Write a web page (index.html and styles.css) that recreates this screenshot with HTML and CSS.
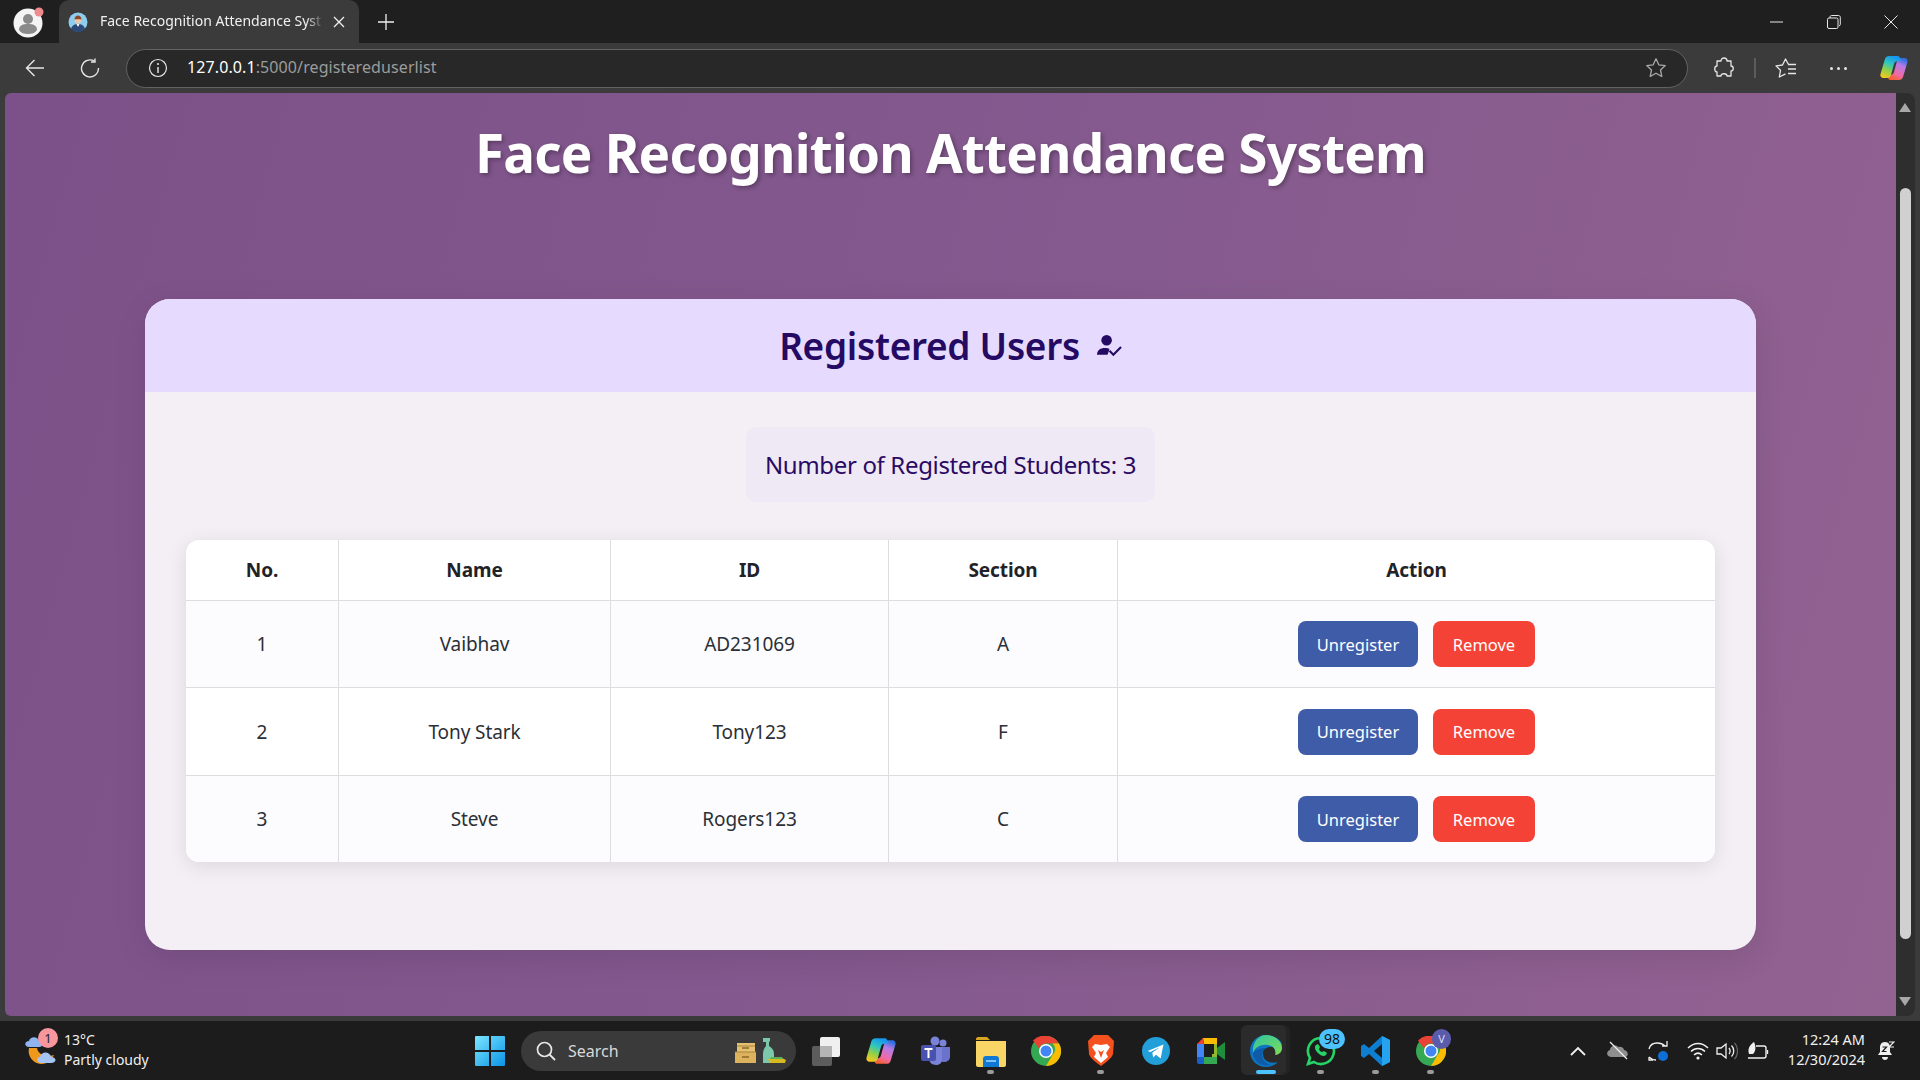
FILE: index.html
```html
<!DOCTYPE html>
<html lang="en">
<head>
    <meta charset="UTF-8">
    <title>Face Recognition Attendance System</title>
    <link rel="stylesheet" href="styles.css">
</head>
<body>
    <!-- browser tab strip -->
    <div class="tabstrip">
        <div class="profile">
            <svg width="32" height="32" viewBox="0 0 32 32"><circle cx="15" cy="17" r="14.5" fill="#f4f4f4"/><circle cx="15" cy="13" r="5" fill="#8a8a8a"/><path d="M6 24c0-5 4-6 9-6s9 1 9 6c-2 3-5 4-9 4s-7-1-9-4z" fill="#8a8a8a"/><circle cx="26" cy="6" r="4.500" fill="#f08a8e"/></svg>
        </div>
        <div class="tab">
            <svg class="favicon" width="20" height="20" viewBox="0 0 20 20"><circle cx="10" cy="10" r="9.500" fill="#8fcdf0"/><path d="M3 17c1-4 4-5 7-5s6 1 7 5c-2 2-4 3-7 3s-5-1-7-3z" fill="#2c4a78"/><path d="M8.500 12h3l-1.500 3z" fill="#fff"/><circle cx="10" cy="8" r="3.400" fill="#f0c6a4"/><path d="M6.500 7.500c0-3 2-4 3.500-4s3.500 1 3.500 4c-2-.5-5-.5-7 0z" fill="#8a4a2a"/></svg>
            <span class="tab-title">Face Recognition Attendance Syst</span>
            <svg class="tab-close" width="12" height="12" viewBox="0 0 12 12"><path d="M1 1l10 10M11 1L1 11" stroke="#f0f0f0" stroke-width="1.300"/></svg>
        </div>
        <svg class="new-tab" width="18" height="18" viewBox="0 0 18 18"><path d="M9 1v16M1 9h16" stroke="#f0f0f0" stroke-width="1.300"/></svg>
        <div class="win-controls">
            <svg width="14" height="14" viewBox="0 0 14 14"><path d="M0 7h13" stroke="#e8e8e8" stroke-width="1"/></svg>
            <svg width="14" height="14" viewBox="0 0 14 14"><path d="M3 3V2c0-.8.5-1.500 1.500-1.500h7c1 0 1.800.8 1.800 1.800v7c0 1-.5 1.500-1.300 1.500" fill="none" stroke="#e8e8e8"/><rect x=".5" y="3" width="10.500" height="10.500" rx="1.500" fill="none" stroke="#e8e8e8"/></svg>
            <svg width="14" height="14" viewBox="0 0 14 14"><path d="M.5.5l13 13M13.500.5l-13 13" stroke="#e8e8e8" stroke-width="1"/></svg>
        </div>
    </div>

    <!-- address bar row -->
    <div class="toolbar">
        <svg class="tool-back" width="20" height="20" viewBox="0 0 20 20"><path d="M19 10H1.500M9.500 2l-8 8 8 8" fill="none" stroke="#e6e6e6" stroke-width="1.400"/></svg>
        <svg class="tool-reload" width="20" height="20" viewBox="0 0 20 20"><path d="M14.500 3.200A8.500 8.500 0 1 0 18.500 10" fill="none" stroke="#e6e6e6" stroke-width="1.400"/><path d="M15 .5v3.500h-4" fill="none" stroke="#e6e6e6" stroke-width="1.400"/></svg>
        <div class="address">
            <svg class="info" width="20" height="20" viewBox="0 0 20 20"><circle cx="10" cy="10" r="8.500" fill="none" stroke="#e8e8e8" stroke-width="1.200"/><path d="M10 9v6" stroke="#e8e8e8" stroke-width="1.400"/><circle cx="10" cy="6" r="1" fill="#e8e8e8"/></svg>
            <span class="url"><b>127.0.0.1</b>:5000/registereduserlist</span>
            <svg class="star" width="22" height="22" viewBox="0 0 22 22"><path d="M11 1.800l2.800 6 6.500.8-4.800 4.400 1.300 6.500-5.800-3.300-5.800 3.300 1.300-6.500L1.700 8.600l6.500-.8z" fill="none" stroke="#a8a8a8" stroke-width="1.300" stroke-linejoin="round"/></svg>
        </div>
        <svg class="tool-puzzle" width="20" height="22" viewBox="0 0 20 22"><path d="M7 4c0-4 6-4 6 0h4v5c3 0 3 5 0 5v5h-4c0-3-6-3-6 0H3v-4c-3 0-3-6 0-6V4z" fill="none" stroke="#e6e6e6" stroke-width="1.300" stroke-linejoin="round"/></svg>
        <span class="tool-sep"></span>
        <svg class="tool-fav" width="22" height="20" viewBox="0 0 22 20"><path d="M13.500 6.500L10.500 1 7.500 7 1 7.800l4.500 4.500L4.300 19l6.200-3.200" fill="none" stroke="#e6e6e6" stroke-width="1.300" stroke-linejoin="round"/><path d="M13 6.500h8M13 11h8M13 15.500h8" stroke="#e6e6e6" stroke-width="1.300"/></svg>
        <div class="tool-dots"><i></i><i></i><i></i></div>
        <svg class="tool-copilot" width="28" height="26" viewBox="0 0 28 26"><defs><linearGradient id="cpa" x1="0.6" y1="0" x2="0.2" y2="1"><stop offset="0" stop-color="#1696f0"/><stop offset=".35" stop-color="#2fc6c0"/><stop offset=".65" stop-color="#8ed04a"/><stop offset="1" stop-color="#f8c81c"/></linearGradient><linearGradient id="cpb" x1="0.7" y1="0" x2="0.3" y2="1"><stop offset="0" stop-color="#2a6fe0"/><stop offset=".3" stop-color="#b47be8"/><stop offset=".7" stop-color="#f06aa8"/><stop offset="1" stop-color="#f5602c"/></linearGradient></defs><path d="M19 25h-8c-1.500 0-2.500-.5-3-2l-1-3h3c2 0 3.500-1 4-3l3-11c.5-2 2-3 4-3h3c3 0 4 2 3.500 4L23 22c-.6 2-2 3-4 3z" fill="url(#cpb)"/><path d="M9 1h8c1.500 0 2.500.5 3 2l1 3h-3c-2 0-3.500 1-4 3l-3 11c-.5 2-2 3-4 3H4c-3 0-4-2-3.500-4L5 4C5.600 2 7 1 9 1z" fill="url(#cpa)"/></svg>
    </div>

    <div class="viewport">
        <main class="page">
            <h1 class="page-title">Face Recognition Attendance System</h1>
            <section class="card">
                <header class="card-head">
                    <h2>Registered Users</h2>
                    <svg class="head-icon" width="25" height="24" viewBox="0 0 26 24"><circle cx="10" cy="6" r="5.500" fill="#240a62"/><path d="M0 21c0-5 4-7 8-7 2 0 4 .5 5 1l-2 6z" fill="#240a62"/><path d="M13 17l4 4 8-8" fill="none" stroke="#240a62" stroke-width="2.200"/></svg>
                </header>
                <div class="card-body">
                    <div class="count">Number of Registered Students: 3</div>
                    <div class="table-wrap">
                        <table class="users">
                            <thead>
                                <tr>
                                    <th class="col-no">No.</th>
                                    <th class="col-name">Name</th>
                                    <th class="col-id">ID</th>
                                    <th class="col-section">Section</th>
                                    <th>Action</th>
                                </tr>
                            </thead>
                            <tbody>
                                <tr>
                                    <td>1</td>
                                    <td>Vaibhav</td>
                                    <td>AD231069</td>
                                    <td>A</td>
                                    <td><div class="actions"><button class="btn btn-blue">Unregister</button><button class="btn btn-red">Remove</button></div></td>
                                </tr>
                                <tr>
                                    <td>2</td>
                                    <td>Tony Stark</td>
                                    <td>Tony123</td>
                                    <td>F</td>
                                    <td><div class="actions"><button class="btn btn-blue">Unregister</button><button class="btn btn-red">Remove</button></div></td>
                                </tr>
                                <tr>
                                    <td>3</td>
                                    <td>Steve</td>
                                    <td>Rogers123</td>
                                    <td>C</td>
                                    <td><div class="actions"><button class="btn btn-blue">Unregister</button><button class="btn btn-red">Remove</button></div></td>
                                </tr>
                            </tbody>
                        </table>
                    </div>
                </div>
            </section>
        </main>
        <div class="scrollbar">
            <span class="arrow-up"></span>
            <span class="thumb"></span>
            <span class="arrow-down"></span>
        </div>
    </div>

    <!-- windows taskbar -->
    <footer class="taskbar">
        <div class="weather">
            <svg width="32" height="32" viewBox="0 0 32 32"><path d="M4 13a13 13 0 0 0 12 16c6 0 10-3 13-9-9 3-16-1-17-7z" fill="#f0981c"/><path d="M4 12c-5 0-5-6 0-6 1-5 9-5 10 0 5 0 5 6 0 6z" fill="#8fb4f0"/><path d="M16 28c-5 0-5-6-1-6 1-6 10-6 11 0 6 0 6 6 0 6z" fill="#a5c4f4"/></svg>
            <span class="weather-badge">1</span>
            <div class="weather-text">
                <span>13°C</span>
                <span>Partly cloudy</span>
            </div>
        </div>
        <div class="start">
            <svg width="30" height="30" viewBox="0 0 30 30"><defs><linearGradient id="win" x1="0" y1="0" x2="1" y2="1"><stop offset="0" stop-color="#7ce6ff"/><stop offset="1" stop-color="#0a94e6"/></linearGradient></defs><path d="M0 1a1 1 0 0 1 1-1h13v14H0zM16 0h13a1 1 0 0 1 1 1v13H16zM0 16h14v14H1a1 1 0 0 1-1-1zM16 16h14v13a1 1 0 0 1-1 1H16z" fill="url(#win)"/></svg>
        </div>
        <div class="search">
            <svg width="20" height="20" viewBox="0 0 20 20"><circle cx="8.500" cy="8.500" r="7" fill="none" stroke="#e8e8e8" stroke-width="1.700"/><path d="M13.500 13.500l5.500 5.500" stroke="#e8e8e8" stroke-width="1.800"/></svg>
            <span class="search-label">Search</span>
            <svg class="search-art" width="51" height="25" viewBox="0 0 51 25"><rect x="2" y="5" width="18" height="9" fill="#e6c071"/><rect x="0" y="14" width="21" height="11" fill="#dcb35c"/><path d="M0 14h21M2 8h18" stroke="#a8853c" stroke-width="1"/><path d="M7 10h7M7 19h7" stroke="#8a6a2a" stroke-width="1.500"/><path d="M28 0h7v3l-1 1v4c3 2 5 4 5 8v9H28v-9c0-3 1-6 3-8V4h-3z" fill="#7cc8aa"/><path d="M33 21l14-1 4 2-1 3H35z" fill="#d8b820"/><path d="M36 19l11 0 1 2H35z" fill="#58b058"/></svg>
        </div>
        <div class="task-icons">
            <span class="task-item">
                <svg width="30" height="30" viewBox="0 0 30 30"><rect x="1" y="10" width="20" height="20" rx="2" fill="#5c5c5c"/><rect x="9" y="1" width="20" height="20" rx="2" fill="#f0f0f0"/><rect x="9" y="10" width="12" height="11" fill="#b4b4b4"/></svg>
            </span>
            <span class="task-item">
                <svg width="30" height="28" viewBox="0 0 28 26"><path d="M19 25h-8c-1.500 0-2.500-.5-3-2l-1-3h3c2 0 3.500-1 4-3l3-11c.5-2 2-3 4-3h3c3 0 4 2 3.500 4L23 22c-.6 2-2 3-4 3z" fill="url(#cpb)"/><path d="M9 1h8c1.500 0 2.500.5 3 2l1 3h-3c-2 0-3.500 1-4 3l-3 11c-.5 2-2 3-4 3H4c-3 0-4-2-3.500-4L5 4C5.600 2 7 1 9 1z" fill="url(#cpa)"/></svg>
            </span>
            <span class="task-item">
                <svg width="30" height="30" viewBox="0 0 30 30"><circle cx="22" cy="7" r="3.500" fill="#7b83d8"/><circle cx="14" cy="5" r="4.500" fill="#7b83d8"/><path d="M18 11h11v10c0 3-3 5-6 5-3 0-5-2-5-5z" fill="#6a72cc"/><path d="M8 11h13v13c0 3-3 5-6 5-4 0-7-3-7-6z" fill="#7b83d8"/><rect x="0" y="9" width="15" height="16" rx="2" fill="#4a52b0"/><path d="M3.500 13h8M7.500 13v9" stroke="#fff" stroke-width="2"/></svg>
            </span>
            <span class="task-item task-running">
                <svg width="32" height="32" viewBox="0 0 32 32"><path d="M1 4c0-1 1-2 2-2h9l3 3h-14z" fill="#d9a520"/><path d="M1 6h30v24c0 1-1 2-2 2H3c-1 0-2-1-2-2z" fill="#f8d564"/><path d="M8 24c0-2 1-3 3-3h10c2 0 3 1 3 3v8H8z" fill="#0f78d4"/><rect x="11" y="25" width="10" height="2" fill="#7fc4f4"/></svg>
            </span>
            <span class="task-item">
                <svg width="30" height="30" viewBox="0 0 30 30"><circle cx="15" cy="15" r="15" fill="#34a853"/><path d="M15 0a15 15 0 0 1 13 7.500H15a7.500 7.500 0 0 0-7 5L2 4.500A15 15 0 0 1 15 0z" fill="#ea4335"/><path d="M28 7.500A15 15 0 0 1 15 30l6.500-11a7.500 7.500 0 0 0 0-11.500z" fill="#fbbc04"/><circle cx="15" cy="15" r="7" fill="#fff"/><circle cx="15" cy="15" r="5.500" fill="#4285f4"/></svg>
            </span>
            <span class="task-item task-running">
                <svg width="26" height="31" viewBox="0 0 26 31"><path d="M6 0h14l3 3 3 3-1 13c-1 4-8 9-12 12C9 28 2 23 1 19L0 6l3-3z" fill="#f4511e"/><path d="M7 9l6 1 6-1 3 3-4 6 2 4-7 6-7-6 2-4-4-6z" fill="#fff"/><path d="M10 15l3 2 3-2-3 8z" fill="#f4511e"/></svg>
            </span>
            <span class="task-item">
                <svg width="28" height="30" viewBox="0 0 30 30"><circle cx="15" cy="15" r="15" fill="#229ed9"/><path d="M6 15l17-7-3 15-5-4-3 3-1-5 8-6-10 5z" fill="#fff"/></svg>
            </span>
            <span class="task-item">
                <svg width="28" height="28" viewBox="0 0 28 28"><path d="M6 1h14v6H7z" fill="#fbbc04"/><path d="M6 1L0 7h7z" fill="#ea4335"/><path d="M0 7h7v13H0z" fill="#4285f4"/><path d="M0 20h7v7H2c-1 0-2-1-2-2z" fill="#1a5fc8"/><path d="M7 20h13v7H7z" fill="#34a853"/><path d="M14 7h6v13h-6z" fill="#8fb830"/><rect x="7" y="7" width="8" height="13" fill="#1c1c1c"/><rect x="7" y="7" width="10" height="10" fill="#1c1c1c"/><path d="M20 11l8-6v18l-8-6z" fill="#1e8e3e"/></svg>
            </span>
            <span class="task-item task-active">
                <svg width="32" height="32" viewBox="0 0 32 32"><defs><linearGradient id="edge" x1="0" y1="0" x2="1" y2="1"><stop offset="0" stop-color="#2fc4a0"/><stop offset="1" stop-color="#7fdc58"/></linearGradient></defs><path d="M16 0C7 0 0 7 0 16c0 9 7 16 16 16 5 0 9-2 12-5-6 2-14 0-15-7-1-6 4-8 8-8 5 0 5 4 4 5 4 0 7-3 7-7C32 5 24 0 16 0z" fill="#0c75c4"/><path d="M16 0c9 0 16 6 16 13 0 4-3 7-7 7 1-2 1-9-7-10C11 9 5 12 3 18 2 8 8 0 16 0z" fill="url(#edge)"/><path d="M3 18c0 8 8 14 18 12-5-1-9-5-9-10 0-3 2-6 4-7-5 0-11 2-13 5z" fill="#0f5ba8"/></svg>
            </span>
            <span class="task-item task-running">
                <svg width="30" height="30" viewBox="0 0 30 30"><path d="M15 2a13 13 0 0 0-11 20l-2 6 6-2A13 13 0 1 0 15 2z" fill="none" stroke="#25d366" stroke-width="2.600"/><path d="M10 9c-2 2-1 5 2 8s6 4 8 2l1-2-3-2-2 1c-1 0-3-2-3-3l1-2-2-3z" fill="#25d366"/></svg>
                <span class="task-badge">98</span>
            </span>
            <span class="task-item task-running">
                <svg width="30" height="30" viewBox="0 0 30 30"><path d="M21 0l8 4v22l-8 4L8 18l-5 4-3-2V10l3-2 5 4z" fill="#0e7fd0"/><path d="M21 8l-8 7 8 7z" fill="#1c1c1c"/><path d="M21 0l8 4v22l-8 4z" fill="#26a3ee"/></svg>
            </span>
            <span class="task-item task-running">
                <svg width="30" height="30" viewBox="0 0 30 30"><circle cx="15" cy="15" r="15" fill="#34a853"/><path d="M15 0a15 15 0 0 1 13 7.500H15a7.500 7.500 0 0 0-7 5L2 4.500A15 15 0 0 1 15 0z" fill="#ea4335"/><path d="M28 7.500A15 15 0 0 1 15 30l6.500-11a7.500 7.500 0 0 0 0-11.500z" fill="#fbbc04"/><circle cx="15" cy="15" r="7" fill="#fff"/><circle cx="15" cy="15" r="5.500" fill="#4285f4"/></svg>
                <span class="task-badge task-badge-v">V</span>
            </span>
        </div>
        <div class="tray">
            <svg class="tray-caret" width="16" height="10" viewBox="0 0 16 10"><path d="M1 9l7-7 7 7" fill="none" stroke="#f0f0f0" stroke-width="1.800"/></svg>
            <svg class="tray-cloud" width="22" height="20" viewBox="0 0 22 20"><path d="M4 16c-5 0-5-6-1-7 0-4 6-6 8-3 3-1 6 1 6 3 5 1 5 7 0 7z" fill="#8e8e8e"/><path d="M3 1l17 17" stroke="#f0f0f0" stroke-width="1.300"/></svg>
            <svg class="tray-sync" width="22" height="22" viewBox="0 0 22 22"><path d="M2 9c1-4 4-6 8-6 4 0 6 1 8 3M20 1v5h-5M6 20H2v-3M2 17c2 2 4 3 7 3" fill="none" stroke="#f0f0f0" stroke-width="1.300"/><circle cx="16" cy="16" r="5" fill="#0f6fd8"/></svg>
            <svg class="tray-wifi" width="22" height="18" viewBox="0 0 22 18"><path d="M1 6c6-6 14-6 20 0M4 9.500c4-4 10-4 14 0M7 13c2.500-2.500 5.500-2.500 8 0" fill="none" stroke="#f0f0f0" stroke-width="1.500"/><circle cx="11" cy="16" r="1.600" fill="#f0f0f0"/></svg>
            <svg class="tray-vol" width="22" height="18" viewBox="0 0 22 18"><path d="M1 6h4l5-4v14l-5-4H1z" fill="none" stroke="#f0f0f0" stroke-width="1.300"/><path d="M13 6c1.500 2 1.500 4 0 6" fill="none" stroke="#f0f0f0" stroke-width="1.300"/><path d="M15.500 3.500c3 3 3 8 0 11" fill="none" stroke="#f0f0f0" stroke-width="1.300"/><path d="M18.500 1c4 4 4 12 0 16" fill="none" stroke="#666" stroke-width="1.300"/></svg>
            <svg class="tray-batt" width="22" height="18" viewBox="0 0 22 18"><path d="M9 4h8c1 0 2 1 2 2v8c0 1-1 2-2 2H1" fill="none" stroke="#f0f0f0" stroke-width="1.400"/><path d="M20.500 8v4" stroke="#f0f0f0" stroke-width="1.400"/><path d="M2 12C0 6 4 2 7 0c2 4 2 9-1 12z" fill="#f0f0f0"/></svg>
            <div class="clock">
                <span>12:24 AM</span>
                <span>12/30/2024</span>
            </div>
            <svg class="tray-bell" width="18" height="20" viewBox="0 0 18 20"><path d="M8 1c-4 0-5 3-5 6v4l-2 3h14l-2-3V7c0-3-1-6-5-6z" fill="#f0f0f0"/><path d="M5 16c0 4 6 4 6 0z" fill="#f0f0f0"/><path d="M5.500 6h4l-4 4.500h4" fill="none" stroke="#1c1c1c" stroke-width="1.200"/><path d="M12 1h5l-5 5h5" fill="none" stroke="#f0f0f0" stroke-width="1.200"/></svg>
        </div>
    </footer>
</body>
</html>
```

FILE: styles.css
```css
*{
    box-sizing: border-box;
}
html, body{
    margin: 0;
    height: 100%;
}
body{
    width: 1920px;
    height: 1080px;
    display: flex;
    flex-direction: column;
    overflow: hidden;
    background: #3b3b3b;
    font-family: "Noto Sans", "Open Sans", sans-serif;
    color: #f0f0f0;
}
svg{
    display: block;
    flex-shrink: 0;
}

/* tab strip */
.tabstrip{
    height: 43px;
    display: flex;
    align-items: center;
    background: #1f1f1f;
}
.profile{
    width: 59px;
    padding-left: 13px;
}
.tab{
    width: 300px;
    height: 43px;
    display: flex;
    align-items: center;
    padding-left: 9px;
    background: #3b3b3b;
    border-radius: 10px 10px 0 0;
}
.tab-title{
    width: 224px;
    margin: 0 0 2px 12px;
    font-size: 14px;
    white-space: nowrap;
    -webkit-mask-image: linear-gradient(to right, #000 92%, transparent);
    mask-image: linear-gradient(to right, #000 92%, transparent);
}
.tab-close{
    margin-left: 9px;
}
.new-tab{
    margin-left: 18px;
}
.win-controls{
    margin-left: auto;
    display: flex;
    gap: 43px;
    padding-right: 22px;
}

/* toolbar */
.toolbar{
    height: 50px;
    display: flex;
    align-items: center;
    background: #3b3b3b;
    padding-left: 25px;
}
.tool-reload{
    margin-left: 35px;
}
.address{
    width: 1562px;
    height: 39px;
    margin-left: 26px;
    display: flex;
    align-items: center;
    padding: 0 20px 0 21px;
    background: #282828;
    border: 1.5px solid #636363;
    border-radius: 20px;
}
.url{
    margin: 0 0 2px 19px;
    font-size: 16px;
    letter-spacing: 0.1px;
    color: #9c9c9c;
}
.url b{
    font-weight: 400;
    color: #fff;
}
.star{
    margin-left: auto;
}
.tool-puzzle{
    margin-left: 26px;
}
.tool-sep{
    width: 2px;
    height: 20px;
    margin-left: 20px;
    background: #5c5c5c;
}
.tool-fav{
    margin-left: 19px;
}
.tool-dots{
    display: flex;
    gap: 4px;
    margin-left: 33px;
}
.tool-dots i{
    width: 3px;
    height: 3px;
    border-radius: 50%;
    background: #e6e6e6;
}
.tool-copilot{
    margin-left: 33px;
}

/* page area */
.viewport{
    height: 923px;
    display: flex;
    padding: 0 5px;
}
.page{
    flex: 1;
    padding-top: 20px;
    background: linear-gradient(105deg, #7c5189 0%, #84598e 50%, #926291 100%);
    border-radius: 6px 0 0 6px;
}
.page-title{
    margin: 0 0 106px;
    height: 80px;
    line-height: 80px;
    text-align: center;
    font-size: 53px;
    letter-spacing: -0.8px;
    font-weight: 700;
    color: #fff;
    text-shadow: 2px 2px 4px rgba(0,0,0,0.3);
}
.card{
    width: 1611px;
    height: 651px;
    margin: 0 auto;
    background: #f3eff5;
    border-radius: 25px;
    overflow: hidden;
    box-shadow: 0 8px 32px rgba(0,0,0,0.1);
}
.card-head{
    height: 93px;
    display: flex;
    align-items: center;
    justify-content: center;
    gap: 17px;
    background: #e6dbff;
    color: #240a62;
}
.card-head h2{
    margin: 0;
    font-size: 37px;
    letter-spacing: -0.3px;
    font-weight: 600;
}
.card-body{
    padding: 35px 41px 0;
}
.count{
    width: 409px;
    height: 75px;
    margin: 0 auto 38px;
    display: flex;
    align-items: center;
    justify-content: center;
    font-size: 24px;
    letter-spacing: -0.35px;
    color: #2a0a62;
    background: #efe9f6;
    border-radius: 10px;
}
.table-wrap{
    border-radius: 13px;
    overflow: hidden;
    background: #fff;
    box-shadow: 0 4px 20px rgba(0,0,0,0.1);
}
.users{
    width: 100%;
    table-layout: fixed;
    border-collapse: separate;
    border-spacing: 0;
    font-size: 19px;
    letter-spacing: -0.1px;
    color: #2b2f36;
    text-align: center;
}
.users th, .users td{
    padding: 0;
    border-right: 1px solid #ddd;
    border-bottom: 1px solid #ddd;
}
.users th:last-child, .users td:last-child{
    border-right: none;
}
.users tbody tr:last-child td{
    border-bottom: none;
}
.users th{
    height: 61px;
    font-weight: 700;
    color: #1f2328;
}
.users td{
    height: 87px;
}
.users tbody tr:nth-child(2) td{
    height: 88px;
}
.users tbody tr:nth-child(3) td{
    height: 86px;
}
.users tbody tr:nth-child(odd){
    background: #fcfcff;
}
.col-no{
    width: 153px;
}
.col-name{
    width: 272px;
}
.col-id{
    width: 278px;
}
.col-section{
    width: 229px;
}
.actions{
    display: flex;
    justify-content: center;
    gap: 15px;
}
.btn{
    height: 46px;
    padding: 0;
    border: none;
    border-radius: 8px;
    font-family: inherit;
    font-size: 16.5px;
    color: #fff;
}
.btn-blue{
    width: 120px;
    background: #3f5ca8;
}
.btn-red{
    width: 102px;
    background: #f44336;
}

/* scrollbar */
.scrollbar{
    width: 19px;
    position: relative;
    background: #2e2e2e;
    border-radius: 0 8px 8px 0;
}
.thumb{
    position: absolute;
    left: 4px;
    top: 95px;
    width: 11px;
    height: 751px;
    border-radius: 6px;
    background: #d0d0d0;
}
.arrow-up, .arrow-down{
    position: absolute;
    left: 3px;
    width: 0;
    height: 0;
    border-left: 6.5px solid transparent;
    border-right: 6.5px solid transparent;
}
.arrow-up{
    top: 10px;
    border-bottom: 9px solid #a8a8a8;
}
.arrow-down{
    bottom: 10px;
    border-top: 9px solid #a8a8a8;
}

/* taskbar */
.taskbar{
    margin-top: 5px;
    height: 59px;
    display: flex;
    align-items: center;
    background: #1c1c1c;
    position: relative;
}
.weather{
    width: 475px;
    display: flex;
    align-items: center;
    padding-left: 25px;
    position: relative;
}
.weather-badge{
    position: absolute;
    left: 38px;
    top: -3px;
    width: 20px;
    height: 20px;
    border-radius: 50%;
    background: #f8969e;
    color: #222;
    font-size: 13px;
    text-align: center;
    line-height: 20px;
}
.weather-text{
    display: flex;
    flex-direction: column;
    gap: 2px;
    margin: 0 0 2px 7px;
    font-size: 14px;
    line-height: 18px;
}
.start{
    width: 46px;
}
.search{
    width: 275px;
    height: 40px;
    display: flex;
    align-items: center;
    padding: 0 10px 0 15px;
    background: #3a3a3a;
    border-radius: 20px;
}
.search-label{
    margin-left: 12px;
    font-size: 16px;
    color: #d8d8d8;
}
.search-art{
    margin-left: auto;
}
.task-icons{
    display: flex;
    margin-left: 2px;
}
.task-item{
    width: 55px;
    height: 59px;
    display: flex;
    align-items: center;
    justify-content: center;
    position: relative;
}
.task-item svg{
    position: relative;
}
.task-running::after{
    content: "";
    position: absolute;
    left: 24px;
    bottom: 6px;
    width: 7px;
    height: 4px;
    border-radius: 2px;
    background: #9a9a9a;
}
.task-active::before{
    content: "";
    position: absolute;
    left: 3px;
    top: 4px;
    width: 45px;
    height: 50px;
    background: #2b2b2b;
    border-radius: 6px;
    box-shadow: 4px 0 0 #232323;
}
.task-active::after{
    content: "";
    position: absolute;
    left: 18px;
    bottom: 6px;
    width: 20px;
    height: 4px;
    border-radius: 2px;
    background: #4cc2ff;
}
.task-badge{
    position: absolute;
    left: 26px;
    top: 8px;
    width: 26px;
    height: 20px;
    border-radius: 10px;
    background: #4cc2ff;
    color: #111;
    font-size: 14px;
    text-align: center;
    line-height: 20px;
}
.task-badge-v{
    left: 29px;
    width: 19px;
    background: #5b5bab;
    color: #dcdcf5;
    font-size: 11px;
}
.tray{
    position: absolute;
    right: 0;
    top: 0;
    height: 59px;
    width: 350px;
    display: flex;
    align-items: center;
}
.tray-cloud{
    margin-left: 21px;
}
.tray-sync{
    margin-left: 18px;
}
.tray-wifi{
    margin-left: 18px;
}
.tray-vol{
    margin-left: 7px;
}
.tray-batt{
    margin-left: 9px;
}
.clock{
    width: 96px;
    margin-bottom: 2px;
    display: flex;
    flex-direction: column;
    align-items: flex-end;
    gap: 3px;
    font-size: 14.5px;
    line-height: 17px;
}
.tray-bell{
    margin-left: 12px;
}
```
